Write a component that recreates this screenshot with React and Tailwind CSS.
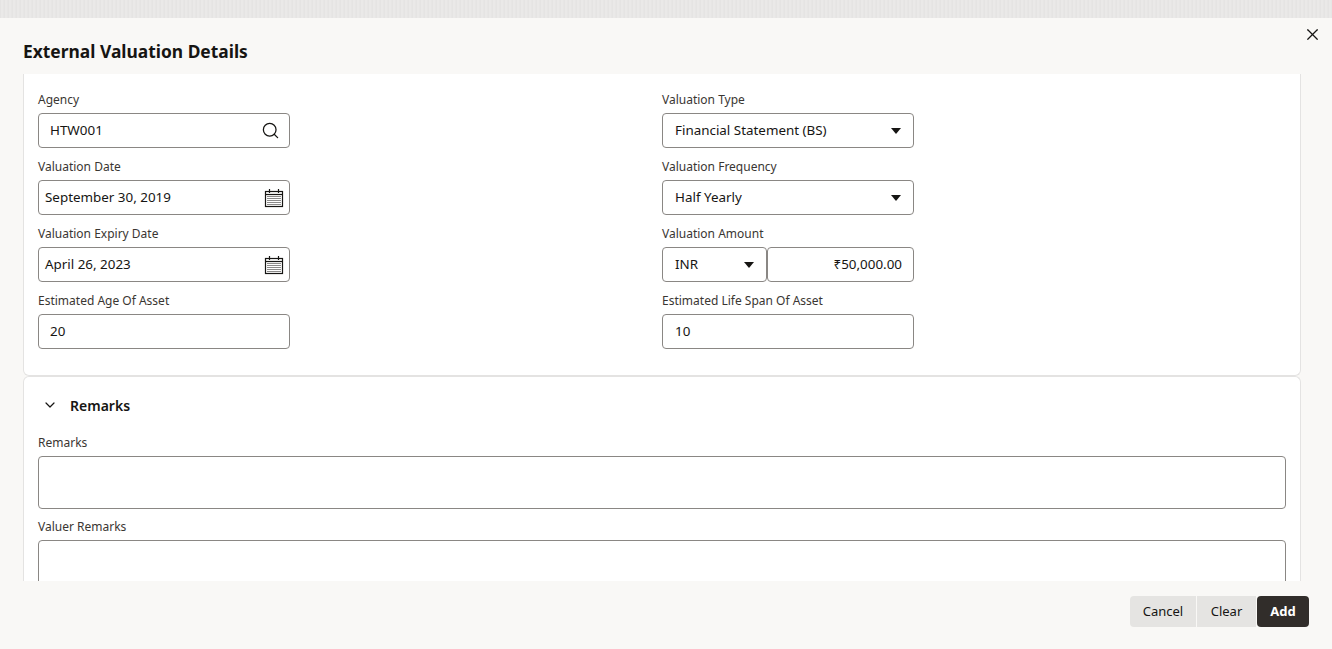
import { Search, X, ChevronDown } from 'lucide-react';

const font = { fontFamily: '"Noto Sans", "Open Sans", Arial, sans-serif' };

const Caret = () => (
  <svg width="10" height="6" viewBox="0 0 10 6"><path d="M0 0h10L5 6z" fill="#161513" /></svg>
);

const CalendarIcon = () => (
  <svg width="20" height="20" viewBox="0 0 20 20" fill="none">
    <rect x="1.5" y="3.5" width="17" height="15" stroke="#161513" strokeWidth="1.2" />
    <line x1="1.5" y1="6.5" x2="18.5" y2="6.5" stroke="#161513" strokeWidth="1.2" />
    <line x1="5.5" y1="1" x2="5.5" y2="5" stroke="#161513" strokeWidth="1.2" />
    <line x1="14.5" y1="1" x2="14.5" y2="5" stroke="#161513" strokeWidth="1.2" />
    {[8.5, 10.5, 12.5, 14.5, 16.5].map(y => [4, 6, 8, 10, 12, 14, 16].map(x => (
      <rect key={`${x}-${y}`} x={x - 0.5} y={y - 0.5} width="1" height="1" fill="#161513" />
    )))}
  </svg>
);

function Field({ label, gap = 'mb-[10px]', children }) {
  return (
    <div className={gap}>
      <div className="text-[12px] leading-[17px] text-[#3a3632] mb-[5px]">{label}</div>
      {children}
    </div>
  );
}

const box = 'w-[252px] h-[35px] border border-[#8a8784] rounded-[4px] bg-white flex items-center text-[13.4px] text-[#161513]';

export default function App() {
  return (
    <div style={font} className="h-[649px] w-[1332px] flex flex-col overflow-hidden bg-[#f9f8f6]">
      <div className="h-[18px] bg-[#e7e6e5] bg-[repeating-linear-gradient(90deg,#e3e2e1_0px,#ecebea_2px,#e5e4e3_4px)]" />

      {/* header */}
      <div className="h-[56px] flex items-start justify-between pl-[23px] pr-[10px]">
        <h1 className="mt-[21px] text-[17.4px] leading-[24px] font-bold text-[#161513]">External Valuation Details</h1>
        <button className="mt-[7px] text-[#161513]"><X size={19} strokeWidth={1.5} /></button>
      </div>

      {/* body */}
      <div className="flex-1 overflow-hidden pl-[23px] pr-[31px]">
        <div className="bg-white border-x border-b border-[#e4e3e2] rounded-b-[6px] pl-[14px] pr-[14px] pt-[17px] pb-[16px]">
          <div className="grid grid-cols-2">
            <div>
              <Field label="Agency">
                <div className={`${box} pl-[11px] pr-[9px] justify-between`}>
                  <span>HTW001</span>
                  <Search size={19} strokeWidth={1.6} />
                </div>
              </Field>
              <Field label="Valuation Date">
                <div className={`${box} pl-[6px] pr-[5px] justify-between`}>
                  <span>September 30, 2019</span>
                  <CalendarIcon />
                </div>
              </Field>
              <Field label="Valuation Expiry Date">
                <div className={`${box} pl-[6px] pr-[5px] justify-between`}>
                  <span>April 26, 2023</span>
                  <CalendarIcon />
                </div>
              </Field>
              <Field label="Estimated Age Of Asset">
                <div className={`${box} pl-[11px]`}>20</div>
              </Field>
            </div>
            <div>
              <Field label="Valuation Type">
                <div className={`${box} pl-[12px] pr-[12px] justify-between`}>
                  <span>Financial Statement (BS)</span>
                  <Caret />
                </div>
              </Field>
              <Field label="Valuation Frequency">
                <div className={`${box} pl-[12px] pr-[12px] justify-between`}>
                  <span>Half Yearly</span>
                  <Caret />
                </div>
              </Field>
              <Field label="Valuation Amount">
                <div className="flex w-[252px]">
                  <div className="w-[105px] h-[35px] border border-[#8a8784] rounded-[4px] bg-white flex items-center justify-between pl-[12px] pr-[12px] text-[13.4px] text-[#161513]">
                    <span>INR</span>
                    <Caret />
                  </div>
                  <div className="flex-1 h-[35px] border border-[#8a8784] rounded-[4px] bg-white flex items-center justify-end pr-[11px] text-[13.4px] text-[#161513]">
                    ₹50,000.00
                  </div>
                </div>
              </Field>
              <Field label="Estimated Life Span Of Asset">
                <div className={`${box} pl-[12px]`}>10</div>
              </Field>
            </div>
          </div>
        </div>

        <div className="bg-white border-x border-t border-[#e4e3e2] rounded-t-[6px] pl-[14px] pr-[14px] pt-[18px]">
          <div className="flex items-center h-[20px] mb-[19px]">
            <ChevronDown size={16} strokeWidth={1.8} className="ml-[4px] text-[#161513]" />
            <span className="ml-[12px] text-[14px] font-semibold text-[#161513]">Remarks</span>
          </div>
          <Field label="Remarks" gap="mb-[9px]">
            <div className="w-full h-[53px] border border-[#8a8784] rounded-[4px] bg-white" />
          </Field>
          <Field label="Valuer Remarks" gap="mb-[9px]">
            <div className="w-full h-[53px] border border-[#8a8784] rounded-[4px] bg-white" />
          </Field>
        </div>
      </div>

      {/* footer */}
      <div className="h-[68px] flex items-start justify-end gap-[1px] pr-[23px] pt-[15px]">
        <button className="h-[31px] w-[66px] bg-[#e5e4e2] rounded-l-[4px] text-[13px] text-[#161513]">Cancel</button>
        <button className="h-[31px] w-[59px] bg-[#e5e4e2] text-[13px] text-[#161513]">Clear</button>
        <button className="h-[31px] w-[52px] bg-[#312d2a] rounded-[4px] text-[13px] font-bold text-white">Add</button>
      </div>
    </div>
  );
}
